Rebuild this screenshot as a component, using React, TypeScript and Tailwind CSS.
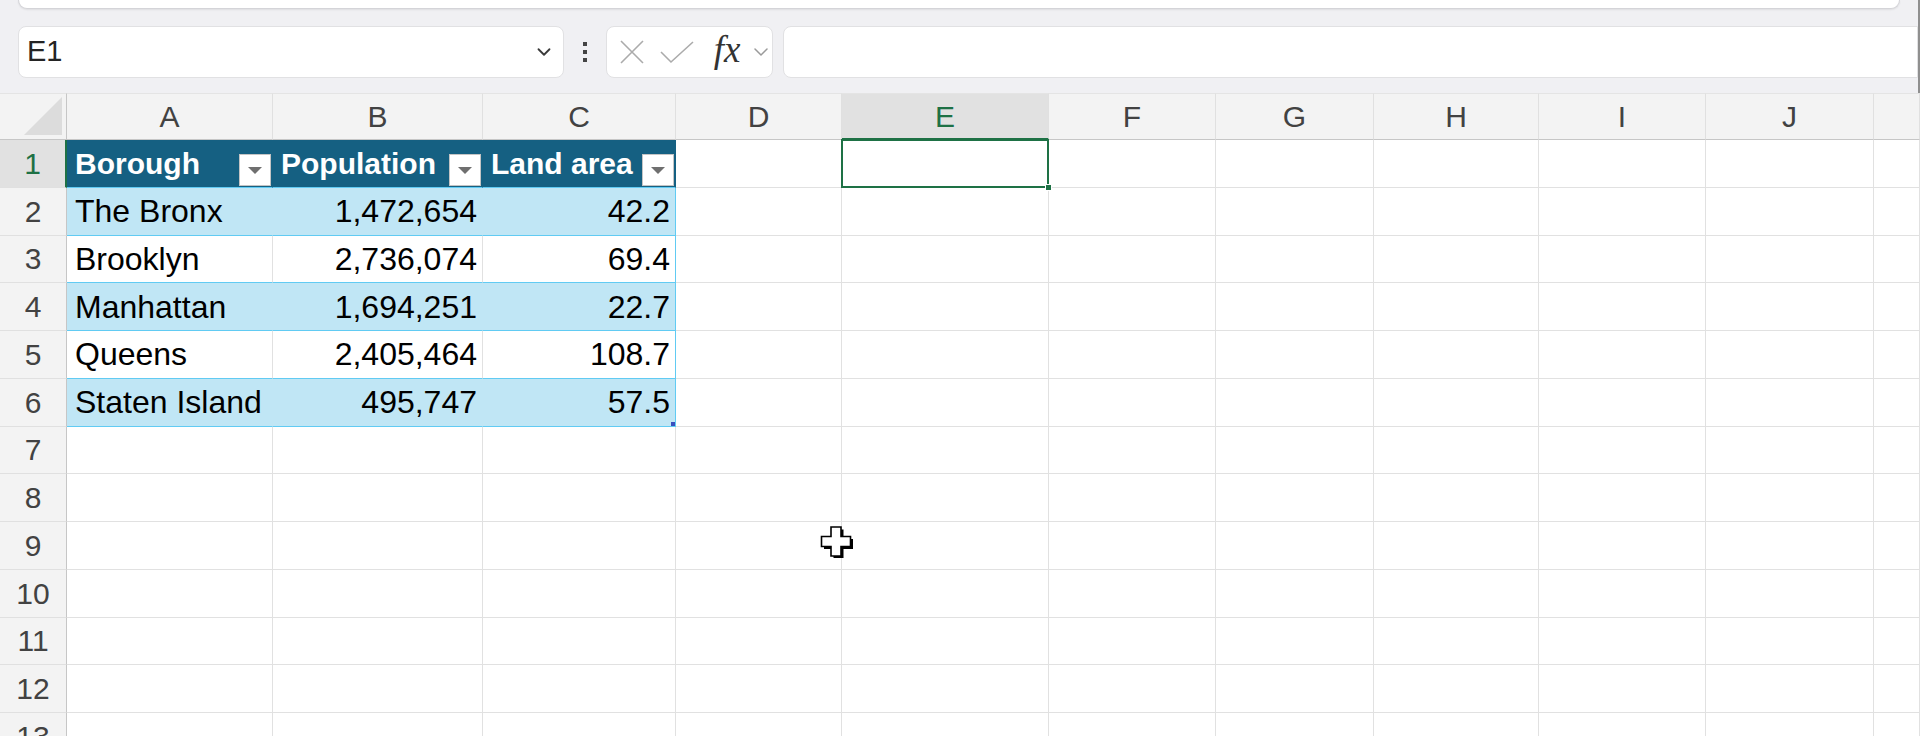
import { ChevronDown } from "lucide-react";

const colWidths = "grid-cols-[67px_206px_210px_193px_166px_207px_167px_158px_165px_167px_168px_1fr]";
const letters = ["A", "B", "C", "D", "E", "F", "G", "H", "I", "J", ""];

const rows = [
	["The Bronx", "1,472,654", "42.2"],
	["Brooklyn", "2,736,074", "69.4"],
	["Manhattan", "1,694,251", "22.7"],
	["Queens", "2,405,464", "108.7"],
	["Staten Island", "495,747", "57.5"],
];
const headers = ["Borough", "Population", "Land area"];

const FilterButton = () => (
	<div className="absolute right-[1px] bottom-[1px] w-[32px] h-[32px] bg-white border border-[#c4c4c4] flex items-center justify-center">
		<svg width="14" height="8" viewBox="0 0 14 8" className="mt-[3px]">
			<path d="M0 0h14L7 7z" fill="#6f6f6f" />
		</svg>
	</div>
);

const TableCell = ({ r, c }: { r: number; c: number }) => {
	const last = c === 2;
	if (r === 1) {
		return (
			<div className="relative bg-[#156082] border-b border-b-[#61cbf3] border-r border-r-[#156082] flex items-center pl-[8px] text-white font-bold text-[30px]">
				<span>{headers[c]}</span>
				<FilterButton />
			</div>
		);
	}
	const band = r % 2 === 0;
	const bg = band ? "bg-[#c0e6f5]" : "bg-white";
	const right = last ? "border-r-[#61cbf3]" : band ? "border-r-[#c0e6f5]" : "border-r-[#e1e1e1]";
	const text = rows[r - 2][c];
	return (
		<div
			className={`relative ${bg} border-b border-b-[#61cbf3] border-r ${right} flex items-center text-[32px] text-black ${
				c === 0 ? "pl-[8px] justify-start" : "pr-[5px] justify-end"
			}`}
		>
			{text}
			{r === 6 && last && <div className="absolute right-0 bottom-0 w-[4px] h-[4px] bg-[#3b4fbf]" />}
		</div>
	);
};

const Cross = () => (
	<svg width="33" height="33" viewBox="0 0 33 33" className="absolute left-[820px] top-[525px]">
		<path
			d="M11 2h10v9.5h9.5v10H21V31H11v-9.5H1.5v-10H11z"
			fill="#000"
			transform="translate(2.5 2.5)"
		/>
		<path d="M11 2h10v9.5h9.5v10H21V31H11v-9.5H1.5v-10H11z" fill="#fff" stroke="#000" strokeWidth="1.6" />
	</svg>
);

const App = () => {
	const sheetRows = Array.from({ length: 13 }, (_, i) => i + 1);
	return (
		<main className="relative w-[1920px] h-[736px] overflow-hidden bg-[#f0f0f3] font-['Liberation_Sans',Arial,sans-serif]">
			{/* ribbon bottom edge */}
			<div className="flex border-r-2 border-[#8f8f8f]">
				<div className="ml-[18px] mr-[18px] flex-1 h-[9px] bg-white rounded-b-[12px] border-x border-b border-[#d4d4d8] shadow-[0_1px_2px_rgba(0,0,0,0.08)]" />
			</div>

			{/* formula bar */}
			<div className="flex items-center pt-[17px] pb-[15px] border-r-2 border-[#8f8f8f]">
				<div className="ml-[18px] w-[546px] h-[52px] bg-white rounded-[8px] border border-[#e1e1e3] flex items-center justify-between pl-[8px] pr-[8px]">
					<span className="text-[29px] text-[#242424]">E1</span>
					<ChevronDown className="w-[22px] h-[22px] text-[#3a3a3a]" strokeWidth={2} />
				</div>
				<div className="w-[42px] flex flex-col items-center gap-[4px]">
					<div className="w-[4px] h-[4px] bg-[#444]" />
					<div className="w-[4px] h-[4px] bg-[#444]" />
					<div className="w-[4px] h-[4px] bg-[#444]" />
				</div>
				<div className="w-[167px] h-[52px] bg-white rounded-[8px] border border-[#e1e1e3] flex items-center">
					<div className="w-[50px] flex justify-center">
						<svg width="26" height="26" viewBox="0 0 26 26">
							<path d="M2 2l22 22M24 2L2 24" stroke="#ababab" strokeWidth="1.6" fill="none" />
						</svg>
					</div>
					<div className="w-[40px] flex justify-center">
						<svg width="34" height="24" viewBox="0 0 34 24">
							<path d="M1 12l10 10L33 2" stroke="#ababab" strokeWidth="1.6" fill="none" />
						</svg>
					</div>
					<div className="w-[60px] flex justify-center">
						<span className="text-[37px] italic text-[#333] font-['Liberation_Serif',serif] leading-none pb-[6px]">
							fx
						</span>
					</div>
					<div className="w-[20px] -ml-[6px] flex justify-center">
						<ChevronDown className="w-[24px] h-[24px] shrink-0 text-[#9a9a9a]" strokeWidth={1.5} />
					</div>
				</div>
				<div className="ml-[10px] flex-1 h-[52px] bg-white rounded-l-[8px] border border-[#e1e1e3]" />
			</div>

			{/* sheet grid */}
			<div className={`grid ${colWidths} grid-rows-[47px_repeat(13,47.75px)] bg-white`}>
				{/* column header */}
				<div className="relative bg-[#f3f3f3] border-b border-b-[#c6c6c6] border-r border-r-[#c6c6c6] border-t border-t-[#e4e4e4]">
					<svg width="40" height="40" viewBox="0 0 40 40" className="absolute right-[2px] bottom-[2px]">
						<path d="M38 0v38H0z" fill="#dcdcdc" />
					</svg>
				</div>
				{letters.map((l, i) => (
					<div
						key={`h${i}`}
						className={`flex items-center justify-center text-[30px] border-t border-t-[#e4e4e4] border-r border-r-[#e0e0e0] ${
							i === 4
								? "bg-[#e1e1e1] text-[#1e7145] border-b-2 border-b-[#1e7145]"
								: "bg-[#f3f3f3] text-[#424242] border-b border-b-[#c6c6c6]"
						}`}
					>
						{l}
					</div>
				))}

				{sheetRows.map((r) => (
					<div key={`r${r}`} className="contents">
						<div
							className={`flex items-center justify-center text-[30px] border-b border-b-[#e0e0e0] ${
								r === 1
									? "bg-[#e1e1e1] text-[#1e7145] border-r-2 border-r-[#1e7145]"
									: "bg-[#f3f3f3] text-[#424242] border-r border-r-[#c6c6c6]"
							}`}
						>
							{r}
						</div>
						{letters.map((_, c) => {
							if (r <= 6 && c <= 2) return <TableCell key={`c${r}-${c}`} r={r} c={c} />;
							if (r === 1 && c === 4) {
								return (
									<div key={`c${r}-${c}`} className="relative border-b border-r border-[#e1e1e1]">
										<div className="absolute -left-[1px] -top-[1px] -right-[1px] -bottom-[1px] border-[2.5px] border-[#1e7145]" />
										<div className="absolute -right-[4px] -bottom-[4px] w-[7px] h-[7px] bg-[#1e7145] border border-white" />
									</div>
								);
							}
							return <div key={`c${r}-${c}`} className="border-b border-r border-[#e1e1e1]" />;
						})}
					</div>
				))}
			</div>

			<Cross />
		</main>
	);
};

export default App;
